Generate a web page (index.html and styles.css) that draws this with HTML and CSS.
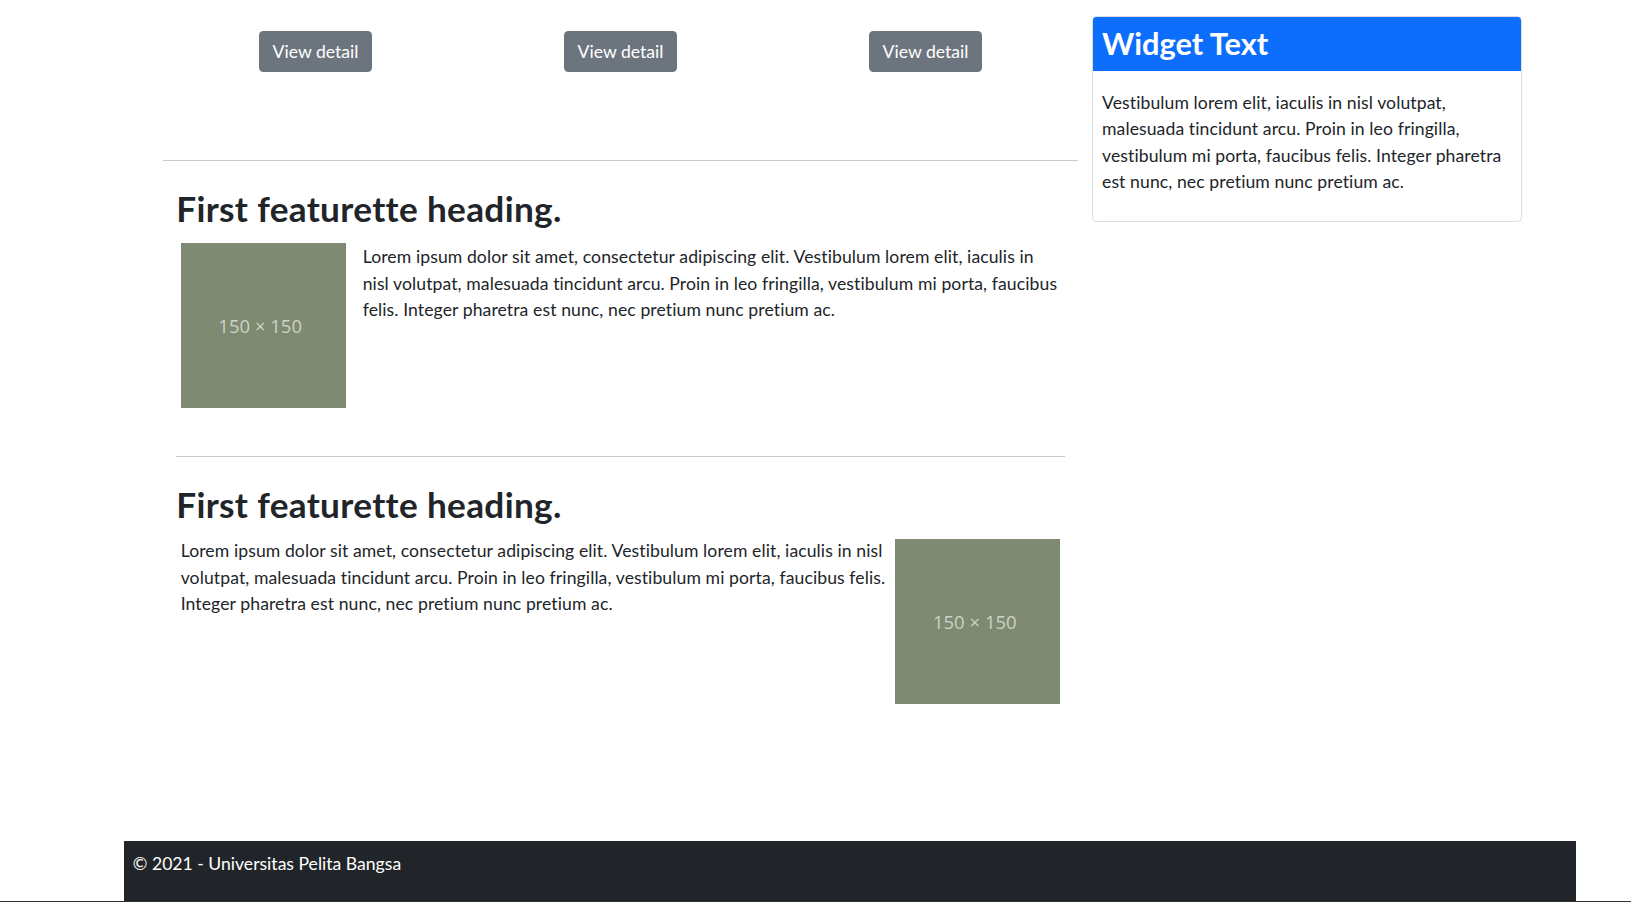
FILE: index.html
```html
<!DOCTYPE html>
<html lang="id">
<head>
<meta charset="utf-8">
<title>Universitas Pelita Bangsa</title>
<link rel="stylesheet" href="styles.css">
</head>
<body>
<div class="page">
  <div class="layout">
    <main class="main">
      <div class="marketing">
        <div class="marketing-col"><a class="btn" href="#">View detail</a></div>
        <div class="marketing-col"><a class="btn" href="#">View detail</a></div>
        <div class="marketing-col"><a class="btn" href="#">View detail</a></div>
      </div>
      <hr class="divider">
      <div class="featurettes">
        <section class="featurette">
          <h2 class="featurette-heading">First featurette heading.</h2>
          <div class="featurette-body">
            <div class="placeholder"><span>150 × 150</span></div>
            <p class="featurette-text">Lorem ipsum dolor sit amet, consectetur adipiscing elit. Vestibulum lorem elit, iaculis in nisl volutpat, malesuada tincidunt arcu. Proin in leo fringilla, vestibulum mi porta, faucibus felis. Integer pharetra est nunc, nec pretium nunc pretium ac.</p>
          </div>
        </section>
        <hr class="divider inner">
        <section class="featurette">
          <h2 class="featurette-heading">First featurette heading.</h2>
          <div class="featurette-body reverse">
            <p class="featurette-text">Lorem ipsum dolor sit amet, consectetur adipiscing elit. Vestibulum lorem elit, iaculis in nisl volutpat, malesuada tincidunt arcu. Proin in leo fringilla, vestibulum mi porta, faucibus felis. Integer pharetra est nunc, nec pretium nunc pretium ac.</p>
            <div class="placeholder"><span>150 × 150</span></div>
          </div>
        </section>
      </div>
    </main>
    <aside class="sidebar">
      <div class="widget">
        <h3 class="widget-title">Widget Text</h3>
        <div class="widget-body">
          <p>Vestibulum lorem elit, iaculis in nisl volutpat, malesuada tincidunt arcu. Proin in leo fringilla, vestibulum mi porta, faucibus felis. Integer pharetra est nunc, nec pretium nunc pretium ac.</p>
        </div>
      </div>
    </aside>
  </div>
  <footer class="footer">
    <p>© 2021 - Universitas Pelita Bangsa</p>
  </footer>
</div>
</body>
</html>
```
FILE: styles.css
```css
* { box-sizing: border-box; }
html, body { margin: 0; padding: 0; }
body {
  font-family: "Lato", "Open Sans", sans-serif;
  font-size: 17.6px;
  line-height: 1.5;
  color: #212529;
  background: #fff;
  border-bottom: 2px solid #333;
  min-height: 902px;
}
.page { width: 1631px; }
.layout { display: flex; gap: 14px; padding-left: 163px; }
.main { width: 915px; }
.marketing { display: grid; grid-template-columns: repeat(3, 305px); padding-top: 31px; }
.marketing-col { text-align: center; }
.btn {
  display: inline-block; background: #6c757d; color: #fff; text-decoration: none;
  padding: 7px 13.2px; border-radius: 4.4px; line-height: 27px; font-size: 17.6px;
}
.divider { border: 0; border-top: 1px solid #c8c9ca; margin: 88px 0 0; }
.divider.inner { margin: 48px 0 0; }
.featurettes { padding: 0 13.2px; }
.featurette-heading { font-size: 35.2px; font-weight: 700; line-height: 1.2; margin: 26px 0 14px 0; letter-spacing: 0.33px; }
.featurette-body { display: flex; align-items: flex-start; padding: 0 2px 0 4.5px; }
.featurette-body.reverse { padding: 0 4.5px; }
.featurette-body .placeholder { margin-right: 17px; }
.featurette-body.reverse .placeholder { margin: 0 0 0 10px; }
.featurette-text { margin: 0; flex: 1; padding-top: 1px; letter-spacing: 0.09px; }
.featurette-body.reverse .featurette-text { padding-top: 0; margin-top: -1px; }
.placeholder {
  width: 165px; height: 165px; flex: none; background: #7e8a72; color: #cdd2c4;
  display: flex; align-items: center; justify-content: center;
  font-family: "Open Sans", sans-serif; font-size: 18.5px; padding-right: 6px;
}
.sidebar { width: 430px; padding-top: 16px; }
.widget { border: 1px solid #dcdddf; border-radius: 4.4px; overflow: hidden; }
.widget-title { margin: 0; background: #0d6efd; color: #fff; font-size: 30.8px; font-weight: 700; line-height: 1.2; padding: 8.5px 9px; }
.widget-body { padding: 19px 9px 8px; }
.widget-body p { margin: 0 0 17.6px; letter-spacing: 0.09px; }
.footer { margin: 137px 0 0 124px; width: 1452px; height: 60px; background: #212529; color: #fff; padding: 10px 8.8px; }
.footer p { margin: 0; }
```
